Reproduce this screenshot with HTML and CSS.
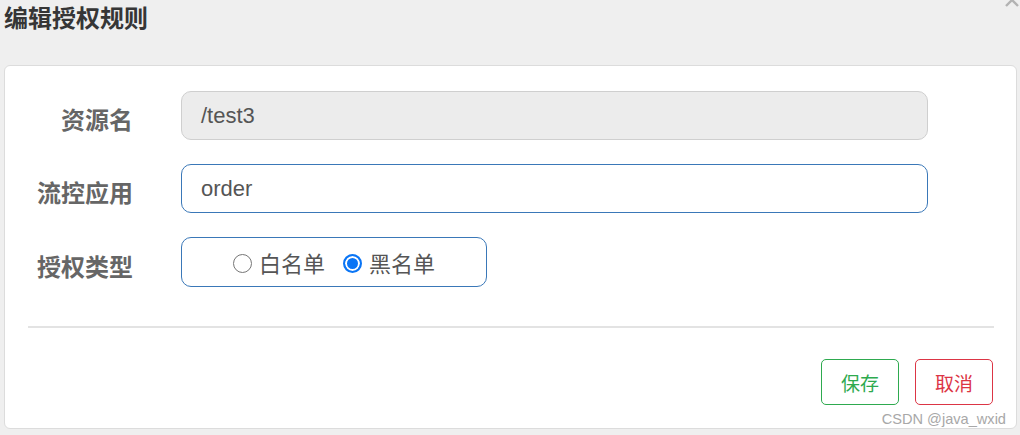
FILE: index.html
```html
<!DOCTYPE html>
<html lang="zh">
<head>
<meta charset="utf-8">
<title>编辑授权规则</title>
<link rel="stylesheet" href="styles.css">
</head>
<body>
<div class="dialog">
  <div class="dialog-head">
    <h1 class="title">编辑授权规则</h1>
    <span class="close" aria-label="close">
      <svg width="16" height="16" viewBox="0 0 16 16"><path d="M2 2 L14 14 M14 2 L2 14" stroke="#b3b3b3" stroke-width="2.4" fill="none"/></svg>
    </span>
  </div>
  <div class="card">
    <div class="form">
      <div class="row">
        <label class="label">资源名</label>
        <div class="field field-disabled">/test3</div>
      </div>
      <div class="row">
        <label class="label">流控应用</label>
        <div class="field">order</div>
      </div>
      <div class="row">
        <label class="label">授权类型</label>
        <div class="field field-radio">
          <span class="radio"></span><span class="radio-text">白名单</span>
          <span class="radio radio-on"></span><span class="radio-text">黑名单</span>
        </div>
      </div>
    </div>
    <div class="divider"></div>
    <div class="actions">
      <button class="btn btn-save">保存</button>
      <button class="btn btn-cancel">取消</button>
    </div>
    <div class="watermark">CSDN @java_wxid</div>
  </div>
</div>
</body>
</html>
```

FILE: styles.css
```css
html, body {
  margin: 0;
  padding: 0;
  background: #efefef;
  width: 1020px;
  height: 435px;
  overflow: hidden;
  font-family: "Liberation Sans", "Noto Sans CJK SC", sans-serif;
}
.dialog {
  position: relative;
  padding: 0 3px 0 4px;
}
.dialog-head {
  height: 65px;
}
.title {
  margin: 0;
  padding-top: 3px;
  font-size: 24px;
  line-height: 28px;
  font-weight: bold;
  color: #363636;
  font-family: "Noto Sans CJK SC", sans-serif;
}
.close {
  position: absolute;
  top: -8px;
  right: 0;
  width: 16px;
  height: 16px;
}
.card {
  position: relative;
  background: #fff;
  border: 1px solid #dcdcdc;
  border-radius: 6px;
  height: 364px;
  box-sizing: border-box;
}
.form {
  padding-top: 25px;
  display: flex;
  flex-direction: column;
  gap: 24px;
}
.row {
  display: flex;
  align-items: center;
}
.label {
  width: 128px;
  text-align: right;
  margin-right: 48px;
  padding-top: 6px;
  font-family: "Noto Sans CJK SC", sans-serif;
  font-weight: bold;
  font-size: 24px;
  color: #666;
}
.field {
  width: 747px;
  height: 49px;
  box-sizing: border-box;
  border: 1px solid #3a78b8;
  border-radius: 10px;
  padding: 0 19px;
  display: flex;
  align-items: center;
  font-size: 22px;
  color: #555;
}
.field-disabled {
  background: #ececec;
  border-color: #cfcfcf;
}
.field-radio {
  width: 306px;
  height: 50px;
  justify-content: center;
  padding: 0;
  font-family: "Noto Sans CJK SC", sans-serif;
}
.radio {
  width: 19px;
  height: 19px;
  box-sizing: border-box;
  border: 1px solid #767676;
  border-radius: 50%;
  background: #fff;
  margin-top: 2px;
}
.radio-on {
  border: 2px solid #0a75f5;
  box-shadow: inset 0 0 0 2px #fff;
  background: #0a75f5;
}
.radio-text {
  margin-left: 7px;
  margin-right: 18px;
  color: #555;
}
.radio-text:last-child {
  margin-right: 0;
}
.divider {
  margin: 39px 22px 0 23px;
  height: 2px;
  background: #e3e3e3;
}
.actions {
  display: flex;
  justify-content: flex-end;
  gap: 16px;
  margin: 31px 23px 0 0;
}
.btn {
  width: 78px;
  height: 46px;
  background: #fff;
  border-radius: 5px;
  font-family: "Noto Sans CJK SC", sans-serif;
  font-size: 19px;
  padding: 0;
}
.btn-save {
  border: 1px solid #2eaa4f;
  color: #2eaa4f;
}
.btn-cancel {
  border: 1px solid #dc3545;
  color: #dc3545;
}
.watermark {
  position: absolute;
  right: 10px;
  bottom: 1px;
  font-size: 14.6px;
  color: #a8a8a8;
}
```
